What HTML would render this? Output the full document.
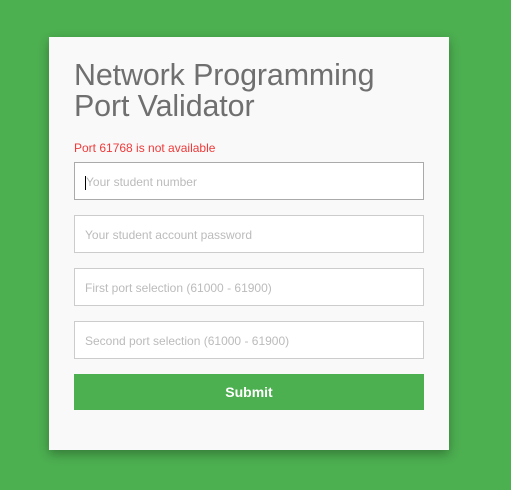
<!DOCTYPE html>
<html><head><style>
html,body{margin:0;padding:0;}
body{width:511px;height:490px;background:#4caf50;position:relative;overflow:hidden;font-family:"Liberation Sans",sans-serif;}
.card{position:absolute;left:49px;top:37px;width:400px;height:413px;background:#f9f9f9;box-shadow:0 4px 10px rgba(0,0,0,0.3);}
h1{position:absolute;left:25px;top:23px;margin:0;font-weight:normal;font-size:30.4px;line-height:31px;color:#6f6f6f;letter-spacing:-0.1px;}
.err{position:absolute;left:25px;top:104px;font-size:12px;color:#f03a3a;}
.in{position:absolute;left:25px;width:348px;height:36px;background:#fff;border:1px solid #ccc;font-size:12px;color:#bbb;line-height:38px;text-indent:10px;box-sizing:content-box;}
.btn{position:absolute;left:25px;top:337px;width:350px;height:36px;background:#4caf50;color:#fff;font-weight:bold;font-size:14px;text-align:center;line-height:36px;}
</style></head><body>
<div class="card">
<h1>Network Programming<br>Port Validator</h1>
<div class="err">Port 61768 is not available</div>
<div class="in" style="top:125px;border-color:#aaa;"><span style="display:inline-block;width:1px;height:14px;background:#000;vertical-align:middle;margin-left:0"></span>Your student number</div>
<div class="in" style="top:178px;">Your student account password</div>
<div class="in" style="top:231px;">First port selection (61000 - 61900)</div>
<div class="in" style="top:284px;">Second port selection (61000 - 61900)</div>
<div class="btn">Submit</div>
</div>
</body></html>
